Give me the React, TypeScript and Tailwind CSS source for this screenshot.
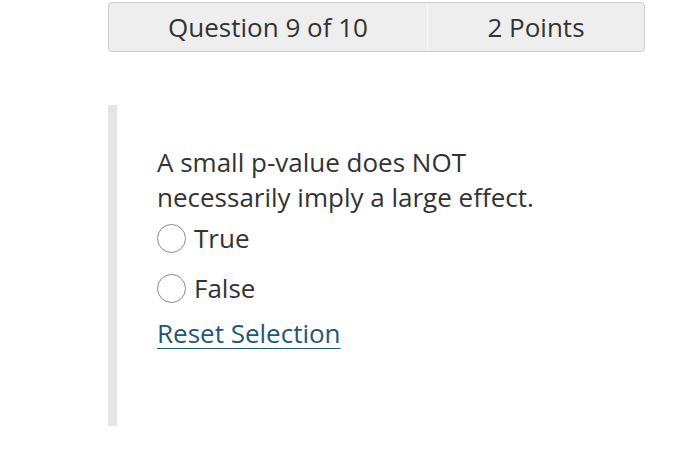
export default function App() {
  return (
    <div className="h-[467px] w-[700px] bg-white font-['Open_Sans',sans-serif] text-[#333333]">
      <div className="ml-[108px] mt-[2px] flex h-[50px] w-[537px] rounded-[4px] border border-[#cccccc] bg-[#eeeeee] text-[26px]">
        <div className="flex w-[319px] items-center justify-center border-r border-[#f8f8f8]">
          Question 9 of 10
        </div>
        <div className="flex flex-1 items-center justify-center">2 Points</div>
      </div>
      <div className="ml-[108px] mt-[53px] flex h-[321px] border-l-[9px] border-[#e5e5e5]">
        <div className="pl-[40px] pt-[40px]">
          <p className="w-[420px] text-[26px] leading-[35px]">
            A small p-value does NOT necessarily imply a large effect.
          </p>
          <div className="mt-[9px] flex flex-col gap-[22px]">
            {["True", "False"].map((label) => (
              <label key={label} className="flex h-[28px] items-center gap-[8px] text-[26px]">
                <span className="h-[29px] w-[29px] rounded-full border-[1.5px] border-[#8a8a8a] bg-white" />
                {label}
              </label>
            ))}
          </div>
          <a
            href="#"
            className="mt-[15px] inline-block text-[26px] leading-[32px] text-[#1f5876] underline decoration-1 underline-offset-[5px]"
          >
            Reset Selection
          </a>
        </div>
      </div>
    </div>
  );
}
